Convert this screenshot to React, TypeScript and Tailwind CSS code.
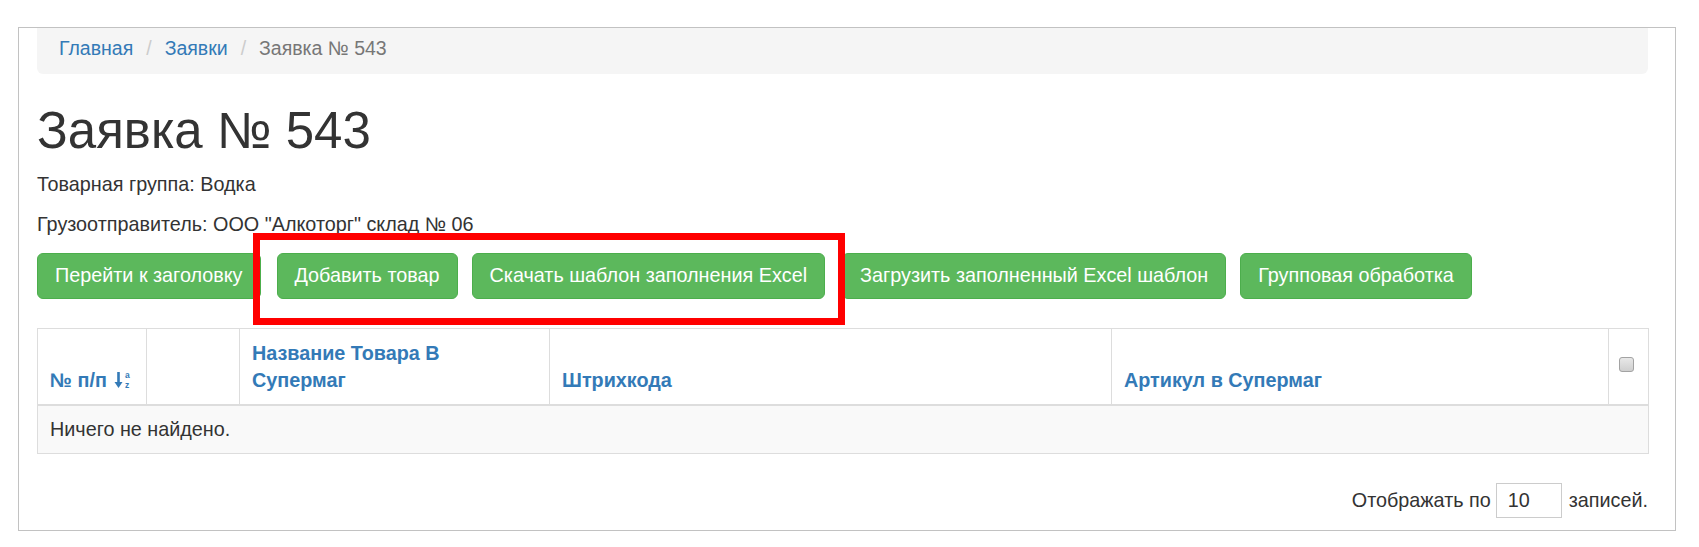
import React from "react";

const buttons = [
  { label: "Перейти к заголовку", gap: "" },
  { label: "Добавить товар", gap: "ml-[16px]" },
  { label: "Скачать шаблон заполнения Excel", gap: "ml-[14px]" },
  { label: "Загрузить заполненный Excel шаблон", gap: "ml-[17px]" },
  { label: "Групповая обработка", gap: "ml-[14px]" },
];

function SortIcon() {
  return (
    <svg width="20" height="18" viewBox="0 0 20 18" className="inline-block ml-[7px] -mt-[4px] align-middle">
      <path d="M4.5 1v12" stroke="#337ab7" strokeWidth="2.6" />
      <path d="M0.5 11 L4.5 17 L8.5 11 Z" fill="#337ab7" />
      <text x="11" y="7" fontSize="8.5" fontWeight="700" fill="#337ab7" fontFamily="Liberation Sans, Arial, sans-serif">a</text>
      <text x="11" y="17" fontSize="8.5" fontWeight="700" fill="#337ab7" fontFamily="Liberation Sans, Arial, sans-serif">z</text>
    </svg>
  );
}

export default function App() {
  return (
    <div className="min-h-screen bg-white pt-[27px] pl-[18px] font-['Liberation_Sans',Arial,sans-serif] text-[#333]">
      <div className="w-[1658px] h-[504px] border border-[#c2c2c2] pl-[18px] pr-[27px]">
        {/* Breadcrumb */}
        <nav className="h-[46px] bg-[#f5f5f5] rounded-b-[6px] flex items-center pl-[22px] pb-[4px] text-[19.5px]">
          <a className="text-[#337ab7]">Главная</a>
          <span className="mx-[13px] text-[#ccc]">/</span>
          <a className="text-[#337ab7]">Заявки</a>
          <span className="mx-[13px] text-[#ccc]">/</span>
          <span className="text-[#777]">Заявка № 543</span>
        </nav>

        <h1 className="mt-[29px] text-[51px] leading-[55px] font-normal">Заявка № 543</h1>
        <p className="mt-[13px] text-[19.8px] leading-[27px]">Товарная группа: Водка</p>
        <p className="mt-[13px] text-[19.8px] leading-[27px]">
          Грузоотправитель: ООО "Алкоторг" склад № 06
        </p>

        {/* Actions */}
        <div className="relative mt-[15px] flex">
          {buttons.map((b) => (
            <button
              key={b.label}
              className={`${b.gap} h-[46px] px-[17px] rounded-[6px] border border-[#4cae4c] bg-[#5cb85c] text-white text-[19.8px] whitespace-nowrap`}
            >
              {b.label}
            </button>
          ))}
          <div className="absolute left-[216px] top-[-20px] w-[592px] h-[92px] border-[7px] border-[#ff0000]" />
        </div>

        {/* Table */}
        <table className="mt-[29px] w-[1611px] table-fixed border-collapse border border-[#ddd] text-[19.8px] leading-[27px]">
          <colgroup>
            <col className="w-[109px]" />
            <col className="w-[93px]" />
            <col className="w-[310px]" />
            <col className="w-[562px]" />
            <col className="w-[497px]" />
            <col className="w-[40px]" />
          </colgroup>
          <thead>
            <tr className="border-b-2 border-[#ddd]">
              <th className="border border-[#ddd] align-bottom text-left font-bold text-[#337ab7] px-[12px] pt-[11px] pb-[10px] whitespace-nowrap">
                № п/п
                <SortIcon />
              </th>
              <th className="border border-[#ddd] pt-[11px] pb-[10px]" />
              <th className="border border-[#ddd] align-bottom text-left font-bold text-[#337ab7] px-[12px] pt-[11px] pb-[10px]">
                Название Товара В
                <br />
                Супермаг
              </th>
              <th className="border border-[#ddd] align-bottom text-left font-bold text-[#337ab7] px-[12px] pt-[11px] pb-[10px]">
                Штрихкода
              </th>
              <th className="border border-[#ddd] align-bottom text-left font-bold text-[#337ab7] px-[12px] pt-[11px] pb-[10px]">
                Артикул в Супермаг
              </th>
              <th className="border border-[#ddd] align-top pt-[28px] pl-[10px]">
                <span className="block w-[15px] h-[15px] rounded-[3px] border border-[#a3a3a3] bg-gradient-to-b from-[#e8e8e8] to-[#cfcfcf]" />
              </th>
            </tr>
          </thead>
          <tbody>
            <tr className="bg-[#f9f9f9]">
              <td colSpan={6} className="border border-[#ddd] px-[12px] py-[10px]">
                Ничего не найдено.
              </td>
            </tr>
          </tbody>
        </table>

        {/* Page size */}
        <div className="mt-[29px] w-[1611px] flex justify-end items-center text-[19.8px]">
          <span>Отображать по</span>
          <input
            defaultValue="10"
            className="ml-[5px] mr-[7px] w-[66px] h-[35px] border border-[#ccc] pl-[11px] text-[19.8px] text-[#333] outline-none"
          />
          <span>записей.</span>
        </div>
      </div>
    </div>
  );
}
